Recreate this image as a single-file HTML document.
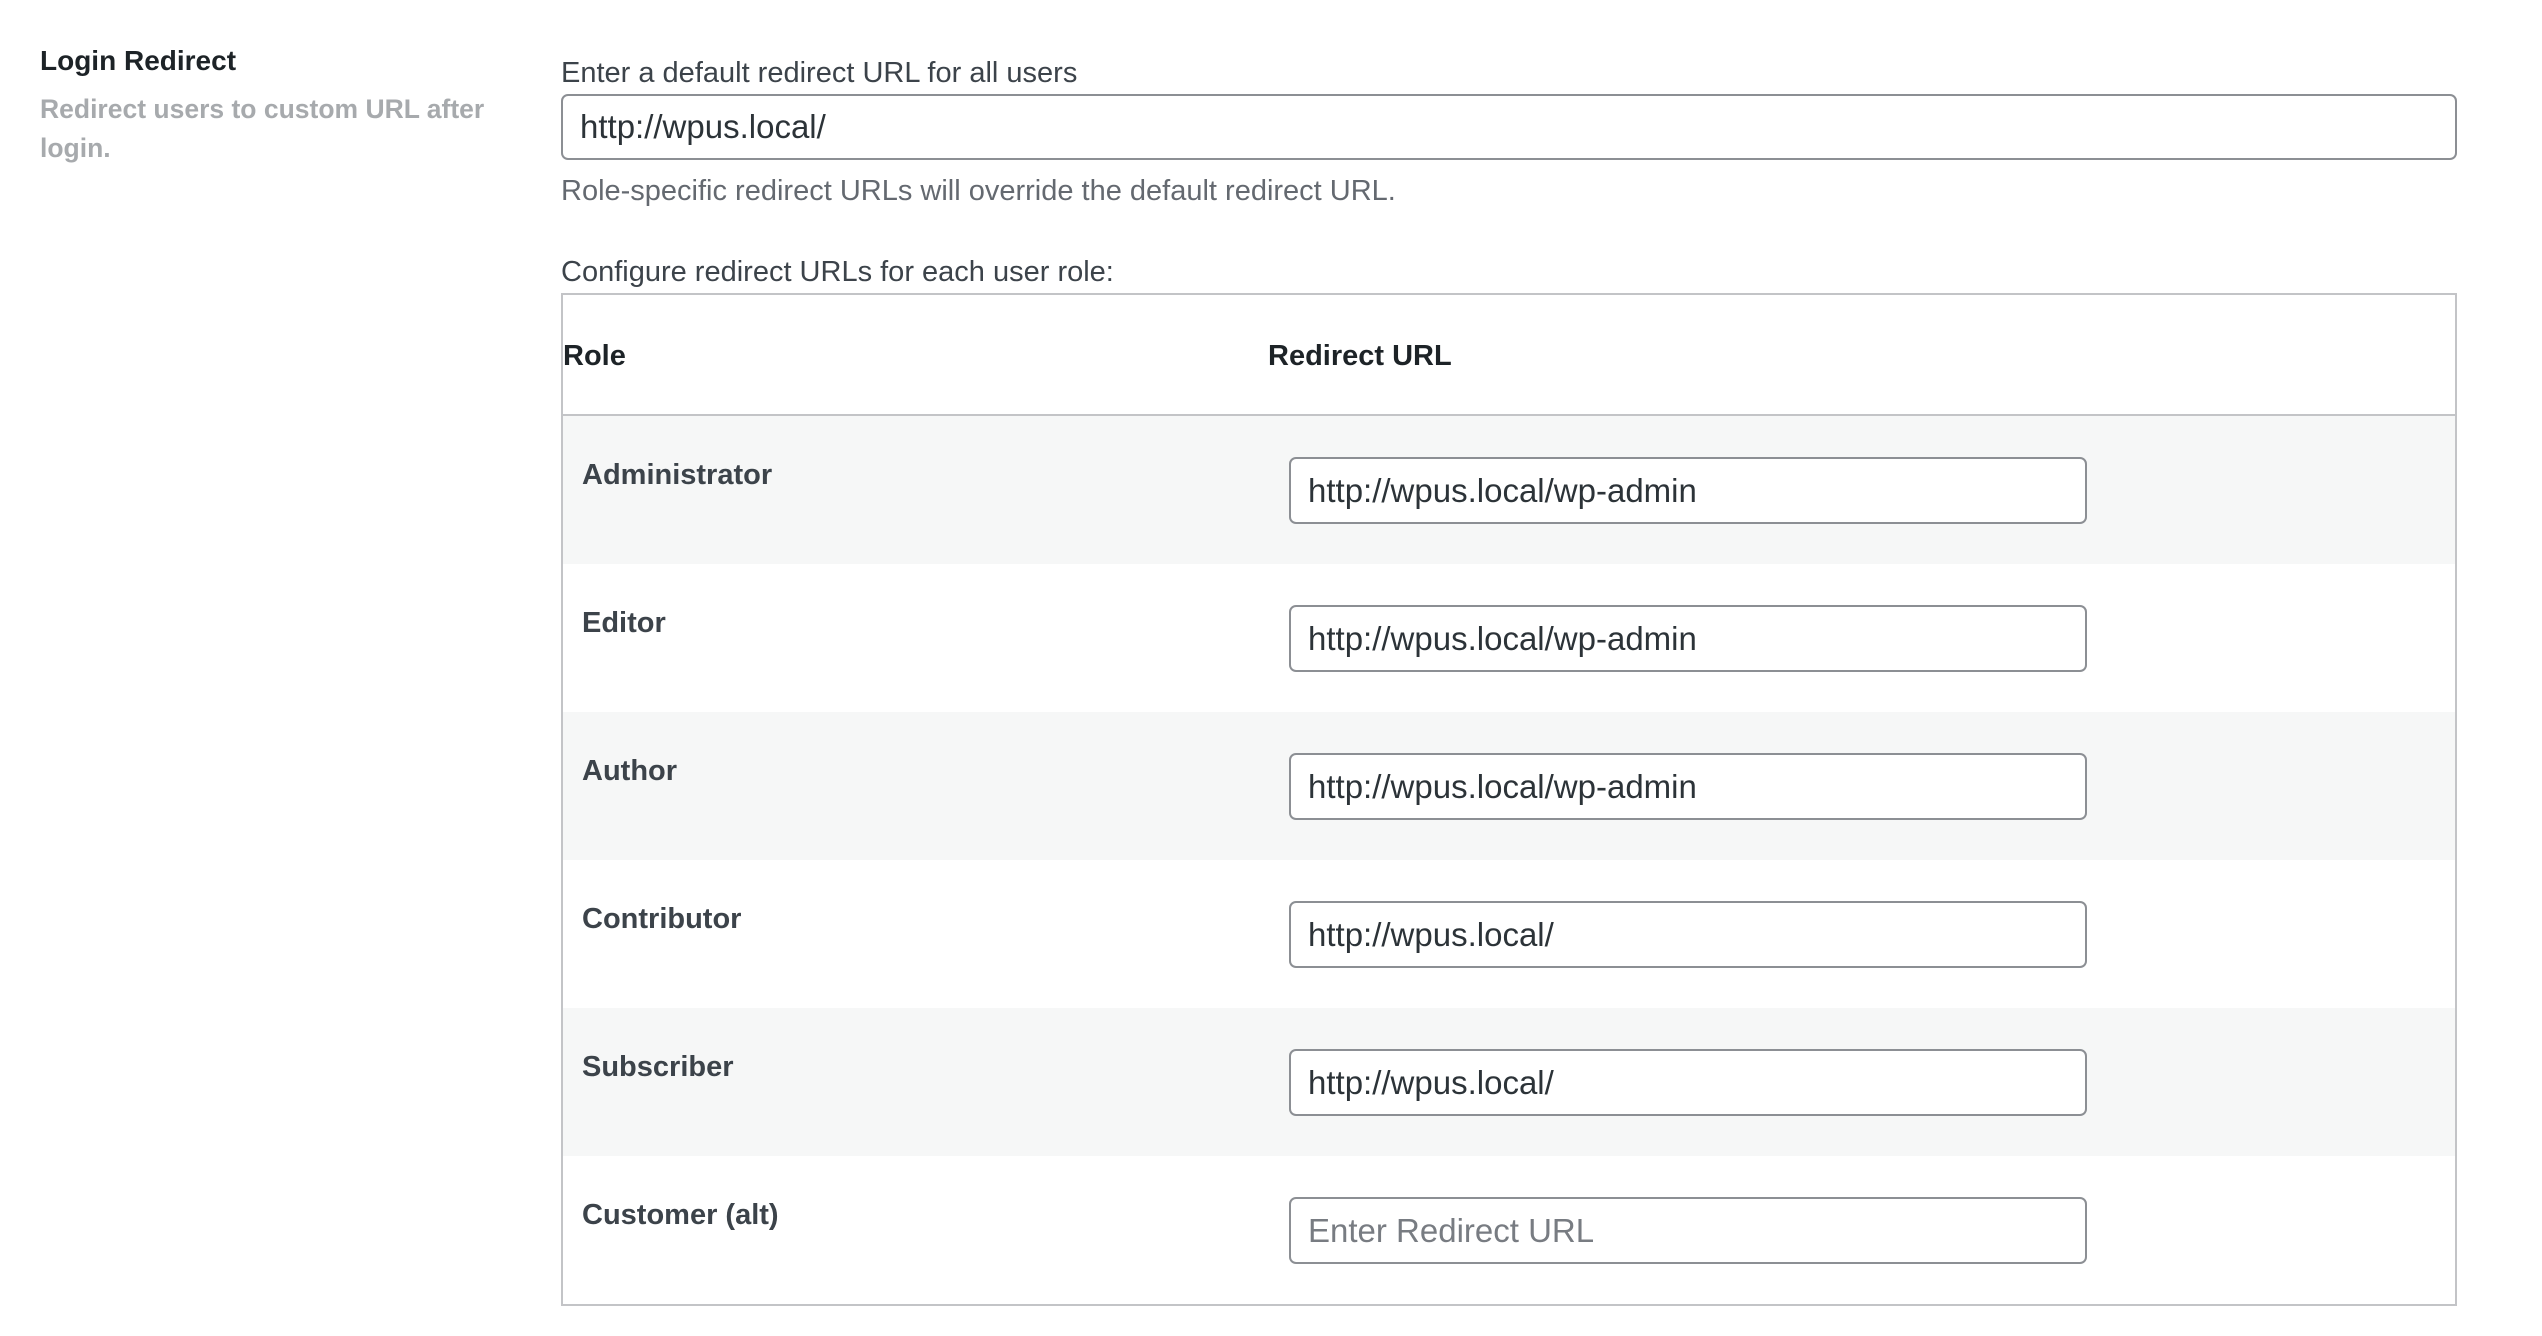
<!DOCTYPE html>
<html><head><meta charset="utf-8"><style>
*{box-sizing:border-box;margin:0;padding:0}
body{width:2542px;height:1336px;background:#fff;font-family:"Liberation Sans",Arial,sans-serif;color:#3c434a;position:relative;overflow:hidden}
.a{position:absolute;white-space:nowrap}
.inp{position:absolute;border:2px solid #8c8f94;border-radius:7px;background:#fff;font-size:33px;color:#2c3338;padding-left:17px;display:flex;align-items:center}
.row{position:absolute;left:563px;width:1892px;height:148px}
.g{background:#f6f7f7}
.rl{position:absolute;left:19px;top:43px;font-size:29px;font-weight:bold;color:#3c434a}
.row .inp{left:726px;top:41px;width:798px;height:67px}
</style></head><body>
<div class="a" style="left:40px;top:45px;font-size:28px;font-weight:bold;color:#1d2327">Login Redirect</div>
<div class="a" style="left:40px;top:90px;font-size:26.5px;font-weight:bold;color:#a7aaad;line-height:39px">Redirect users to custom URL after<br>login.</div>
<div class="a" style="left:561px;top:57px;font-size:29px;color:#3c434a">Enter a default redirect URL for all users</div>
<div class="inp" style="left:561px;top:94px;width:1896px;height:66px">http://wpus.local/</div>
<div class="a" style="left:561px;top:175px;font-size:29px;color:#646970">Role-specific redirect URLs will override the default redirect URL.</div>
<div class="a" style="left:561px;top:256px;font-size:29px;color:#3c434a">Configure redirect URLs for each user role:</div>
<div style="position:absolute;left:561px;top:293px;width:1896px;height:1013px;border:2px solid #c3c4c7"></div>
<div style="position:absolute;left:563px;top:414px;width:1892px;height:2px;background:#c3c4c7"></div>
<div class="a" style="left:563px;top:340px;font-size:29px;font-weight:bold;color:#1d2327">Role</div>
<div class="a" style="left:1268px;top:340px;font-size:29px;font-weight:bold;color:#1d2327">Redirect URL</div>
<div class="row g" style="top:416px"><div class="rl">Administrator</div><div class="inp">http://wpus.local/wp-admin</div></div>
<div class="row" style="top:564px"><div class="rl">Editor</div><div class="inp">http://wpus.local/wp-admin</div></div>
<div class="row g" style="top:712px"><div class="rl">Author</div><div class="inp">http://wpus.local/wp-admin</div></div>
<div class="row" style="top:860px"><div class="rl">Contributor</div><div class="inp">http://wpus.local/</div></div>
<div class="row g" style="top:1008px"><div class="rl">Subscriber</div><div class="inp">http://wpus.local/</div></div>
<div class="row" style="top:1156px;height:148px"><div class="rl">Customer (alt)</div><div class="inp" style="color:#787c82">Enter Redirect URL</div></div>
</body></html>
